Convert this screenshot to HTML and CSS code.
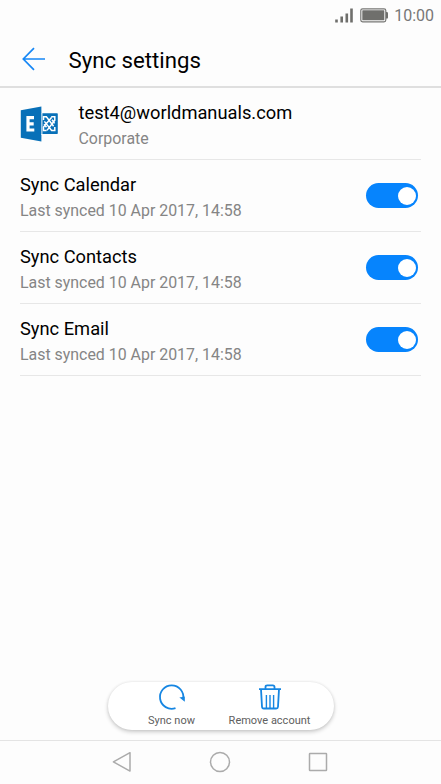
FILE: index.html
```html
<!DOCTYPE html>
<html lang="en">
<head>
<meta charset="utf-8">
<title>Sync settings</title>
<link rel="stylesheet" href="styles.css">
</head>
<body>
<div class="screen">
  <div class="status">
    <svg class="signal" width="18" height="16" viewBox="0 0 18 16"><path d="M1.5 14.5v-3M6.7 14.5v-6M11.8 14.5v-9M16.5 14.5v-14" /></svg>
    <svg class="battery" width="29" height="15" viewBox="0 0 29 15"><rect class="case" x=".8" y=".8" width="25" height="13" rx="1.8"/><rect class="charge" x="2.3" y="2.3" width="22" height="10" rx=".5"/><path class="charge" d="M26 4h.8q1.2 0 1.2 1.2v4.2q0 1.2-1.2 1.2H26z"/></svg>
    <span class="clock">10:00</span>
  </div>
  <header class="header">
    <svg class="back" width="24" height="24" viewBox="0 0 24 24"><path d="M23 12H1.4M12 1.2L1.3 12 12 22.8"/></svg>
    <h1 class="title">Sync settings</h1>
  </header>
  <main class="list">
    <section class="row account">
      <svg class="logo" width="38" height="36" viewBox="0 0 38 36">
        <rect class="brand" x="20" y="7.2" width="17.8" height="20.8" rx=".8"/>
        <path class="knot" d="M23.5 14V10.8H26.4L33.6 20.2M31.2 10.8h3.6v3.4L27 24.4M34.8 21V24.4H31.6l-7.2-9M26.6 24.4h-3.1v-3.4l8-9.6M24 18.2l2.5 3M32 13.8l2.6 3.6"/>
        <path class="brand" d="M.8 4.2L21.4 .4v35.2L.8 31.8z"/>
        <path class="letter" d="M14 11.6H8v12.4H14.3M8 17.8h5.7"/>
        <path class="edge" d="M21.9 7v22"/>
      </svg>
      <div class="text"><div class="name">test4@worldmanuals.com</div><div class="detail">Corporate</div></div>
    </section>
    <section class="row"><div class="text"><div class="name">Sync Calendar</div><div class="detail">Last synced 10 Apr 2017, 14:58</div></div><div class="toggle"><span class="knob"></span></div></section>
    <section class="row"><div class="text"><div class="name">Sync Contacts</div><div class="detail">Last synced 10 Apr 2017, 14:58</div></div><div class="toggle"><span class="knob"></span></div></section>
    <section class="row"><div class="text"><div class="name">Sync Email</div><div class="detail">Last synced 10 Apr 2017, 14:58</div></div><div class="toggle"><span class="knob"></span></div></section>
  </main>
  <div class="actions">
    <div class="action">
      <svg width="28" height="28" viewBox="0 0 28 28"><path d="M17.5 25.1A11.7 11.7 0 1 1 25.2 16"/><path class="tip" d="M21.4 14.4l5.4-1v5.4z"/></svg>
      <span>Sync now</span>
    </div>
    <div class="action">
      <svg width="28" height="28" viewBox="0 0 28 28"><path d="M3 6.2h22M9.5 5.8V4q0-1.7 1.7-1.7h5.6q1.7 0 1.7 1.7v1.8M5 6.2l1 17.6q.1 1.7 1.8 1.7h12.4q1.7 0 1.8-1.7l1-17.6"/><path class="slats" d="M10.4 12V25M14 12V25M17.6 12V25"/></svg>
      <span>Remove account</span>
    </div>
  </div>
  <nav class="nav">
    <svg width="22" height="22" viewBox="0 0 22 22"><path d="M19 1.7v18.4L2.4 10.9z"/></svg>
    <svg width="22" height="22" viewBox="0 0 22 22"><circle cx="11" cy="11" r="9.5"/></svg>
    <svg width="22" height="22" viewBox="0 0 22 22"><rect x="2.5" y="2.5" width="17" height="17" rx=".5"/></svg>
  </nav>
</div>
</body>
</html>
```
FILE: styles.css
```css
* { box-sizing: border-box; }
body { margin: 0; background: #fdfdfd; font-family: Roboto, "Liberation Sans", sans-serif; color: #000; }
svg { display: block; flex: none; fill: none; }
.screen { width: 441px; height: 784px; display: flex; flex-direction: column; overflow: hidden; }
.status { height: 30px; display: flex; align-items: center; justify-content: flex-end; padding: 1px 7px 0 0; }
.signal { stroke: #6f6f6c; stroke-width: 2.6; margin-right: 7px; }
.battery { margin-right: 5px; }
.case { stroke: #777774; stroke-width: 1.2; }
.charge { fill: #6f6f6c; }
.clock { font-size: 16px; line-height: 30px; color: #777; padding-top: 1px; }
.header { height: 58px; display: flex; align-items: center; padding: 0 22px; border-bottom: 2px solid #dfdfdf; }
.back { stroke: #1687f5; stroke-width: 1.7; margin-top: 2px; }
.title { margin: 3px 0 0 22.5px; font-size: 22.2px; line-height: 30px; font-weight: 400; }
.list { padding: 0 20px; }
.row { height: 72px; display: flex; align-items: center; justify-content: space-between; border-bottom: 1px solid #e7e7e7; }
.account { justify-content: flex-start; gap: 20.5px; }
.text { padding-top: 4px; }
.brand { fill: #0870b8; }
.knot { stroke: #fff; stroke-width: 1.5; }
.letter { stroke: #fff; stroke-width: 3.2; }
.edge { stroke: #fff; stroke-width: 1; }
.name { font-size: 18.3px; line-height: 26px; white-space: nowrap; }
.detail { font-size: 15.92px; line-height: 26px; color: #858585; white-space: nowrap; }
.toggle { width: 52px; height: 25px; margin-right: 3px; padding: 0 2.5px; border-radius: 13px; background: #0684fd; display: flex; align-items: center; justify-content: flex-end; }
.knob { width: 18px; height: 18px; border-radius: 50%; background: #fff; }
.actions { width: 226px; height: 48px; margin: auto auto 10px 107.5px; padding: 1px 15px 0; border-radius: 24px; background: #fff; box-shadow: 0 2px 4px rgba(0,0,0,.2), 0 0 3px rgba(0,0,0,.08); display: flex; }
.action { width: 98px; display: flex; flex-direction: column; align-items: center; font-size: 11px; line-height: 18px; color: #606060; white-space: nowrap; }
.action span { padding-top: 1px; }
.action svg { stroke: #1686e2; stroke-width: 1.8; }
.action .slats { stroke-width: 1.4; }
.action .tip { fill: #1686e2; stroke: none; }
.nav { height: 44px; padding: 0 1px 2px 0; border-top: 1px solid #e4e4e4; display: flex; align-items: center; justify-content: center; gap: 76px; }
.nav svg { stroke: #ababab; stroke-width: 1.5; stroke-linejoin: round; }
```
